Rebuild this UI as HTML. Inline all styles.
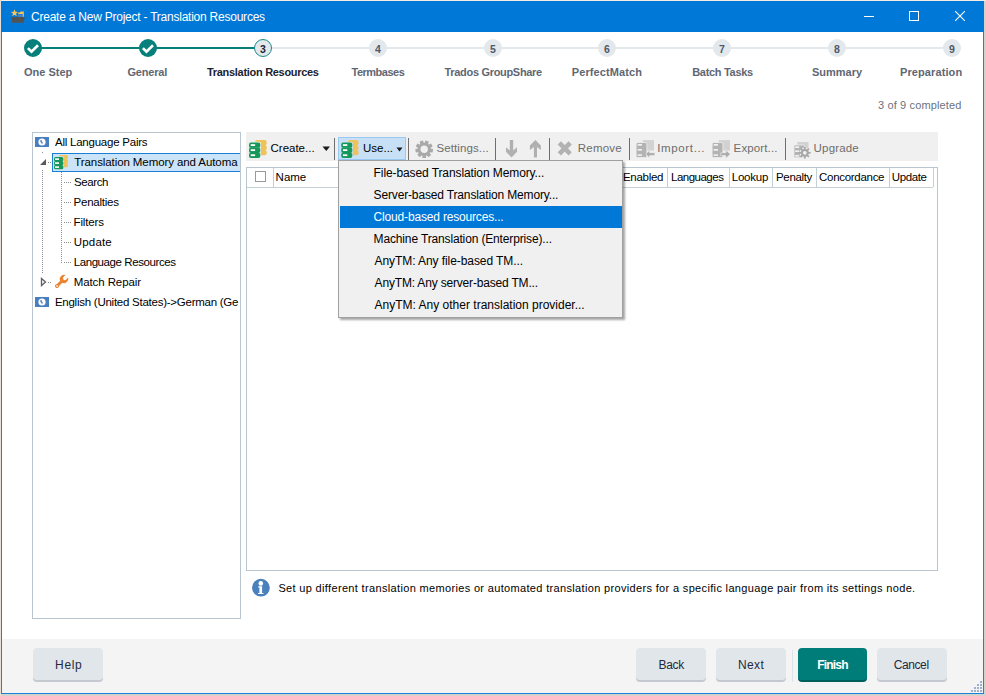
<!DOCTYPE html>
<html><head><meta charset="utf-8">
<style>
*{box-sizing:border-box;margin:0;padding:0}
html,body{width:986px;height:696px;overflow:hidden;background:#d6d1cd;font-family:"Liberation Sans",sans-serif;font-size:12px;color:#000}
.a{position:absolute}
.tx{position:absolute;white-space:nowrap;line-height:14px;z-index:2}
#mn0,#mn1,#mn2,#mn3,#mn4,#mn5,#mn6{z-index:5}
#win{position:absolute;left:1px;top:1px;width:983px;height:693px;background:#fff;border:1px solid #1a82d9;border-top:none}
#title{position:absolute;left:1px;top:1px;width:983px;height:31px;background:#0078d7}
.c{position:absolute;width:18px;height:18px;border-radius:50%;top:39px}
.done{background:#07807c}
.todo{background:#e3e8ed;color:#505865;font-weight:bold;font-size:10.5px;text-align:center;line-height:20px}
.cur{background:#e3e8ed;border:1px solid #1b8b87;color:#1b2331;font-weight:bold;font-size:10.5px;text-align:center;line-height:18px}
.line{position:absolute;top:47px;height:2px}
.tree{position:absolute;left:32px;top:132px;width:209px;height:487px;border:1px solid #b9c6cf;background:#fff}
.tb{position:absolute;left:246px;top:132px;width:692px;height:29px;background:#f0f0f0}
.sep{position:absolute;top:138px;width:1px;height:22px;background:#6e6e6e}
.grid{position:absolute;left:246px;top:167px;width:692px;height:404px;border:1px solid #b9c6cf;background:#fff}
.hs{position:absolute;top:168px;width:1px;height:19px;background:#c4d0d8}
.menu{position:absolute;left:338px;top:160px;width:285px;height:158px;background:#f0f0f0;border:1px solid #a0a0a0;box-shadow:2px 2px 2px rgba(0,0,0,0.35);z-index:4}
.footer{position:absolute;left:2px;top:639px;width:981px;height:54px;background:#f4f4f4}
.btn{position:absolute;top:648px;width:70px;height:32px;background:#e1e6ea;border-radius:4px;box-shadow:0 2px 0 #c3c9ce}
.dotv{position:absolute;width:1px;background-image:linear-gradient(#a0a0a0 50%,transparent 50%);background-size:1px 2px}
.doth{position:absolute;height:1px;background-image:linear-gradient(90deg,#a0a0a0 50%,transparent 50%);background-size:2px 1px}

</style></head><body>
<div class="a" style="left:0;top:0;width:986px;height:1px;background:#f5ebe1"></div>
<div class="a" style="left:0;top:0;width:1px;height:696px;background:#e9dfd7"></div>
<div id="win"></div>
<div id="title">
  <svg class="a" style="left:9px;top:8px" width="16" height="15" viewBox="0 0 16 15">
    <polygon points="4.50,0.30 5.47,2.77 8.11,2.93 6.07,4.61 6.73,7.17 4.50,5.75 2.27,7.17 2.93,4.61 0.89,2.93 3.53,2.77" fill="#fac55a"/>
    <path d="M8 5.4 H12.8 V7.8 H8 Z" fill="#4a86c6"/>
    <path d="M8.2 3.6 H10 L10.6 2.6 H13.8 V7.8 H12.8 V4.9 H8.2 Z" fill="#fac55a"/>
    <path d="M1.2 8 H14.7 L13.7 13.7 H2.3 Z" fill="#535353"/>
  </svg>
  <div class="a" style="left:863px;top:15px;width:10px;height:1px;background:#fff"></div>
  <div class="a" style="left:908px;top:10px;width:10px;height:10px;border:1px solid #fff"></div>
  <svg class="a" style="left:954px;top:10px" width="10" height="10" viewBox="0 0 10 10"><path d="M0 0 L10 10 M10 0 L0 10" stroke="#fff" stroke-width="1.1"/></svg>
</div>
<div class="line" style="left:33px;width:230px;background:#07807c"></div>
<div class="line" style="left:263px;width:689px;background:#e3e8ec"></div>
<div class="c done" style="left:24px"><svg width="18" height="18" viewBox="0 0 18 18" style="position:absolute;left:0;top:0"><path d="M3.9 9.1 L7.5 12.7 L14 6.3" fill="none" stroke="#fff" stroke-width="2.7"/></svg></div>
<div class="c done" style="left:139px"><svg width="18" height="18" viewBox="0 0 18 18" style="position:absolute;left:0;top:0"><path d="M3.9 9.1 L7.5 12.7 L14 6.3" fill="none" stroke="#fff" stroke-width="2.7"/></svg></div>
<div class="c cur" style="left:254px">3</div>
<div class="c todo" style="left:369px">4</div>
<div class="c todo" style="left:484px">5</div>
<div class="c todo" style="left:598px">6</div>
<div class="c todo" style="left:713px">7</div>
<div class="c todo" style="left:828px">8</div>
<div class="c todo" style="left:943px">9</div>
<!-- TREE -->
<div class="tree"></div>
<svg class="a" style="left:0;top:0;z-index:1" width="260" height="320" shape-rendering="crispEdges"><g fill="#8c8c8c"><rect x="42" y="152" width="1" height="1"/><rect x="42" y="170" width="1" height="1"/><rect x="42" y="172" width="1" height="1"/><rect x="42" y="174" width="1" height="1"/><rect x="42" y="176" width="1" height="1"/><rect x="42" y="178" width="1" height="1"/><rect x="42" y="180" width="1" height="1"/><rect x="42" y="182" width="1" height="1"/><rect x="42" y="184" width="1" height="1"/><rect x="42" y="186" width="1" height="1"/><rect x="42" y="188" width="1" height="1"/><rect x="42" y="190" width="1" height="1"/><rect x="42" y="192" width="1" height="1"/><rect x="42" y="194" width="1" height="1"/><rect x="42" y="196" width="1" height="1"/><rect x="42" y="198" width="1" height="1"/><rect x="42" y="200" width="1" height="1"/><rect x="42" y="202" width="1" height="1"/><rect x="42" y="204" width="1" height="1"/><rect x="42" y="206" width="1" height="1"/><rect x="42" y="208" width="1" height="1"/><rect x="42" y="210" width="1" height="1"/><rect x="42" y="212" width="1" height="1"/><rect x="42" y="214" width="1" height="1"/><rect x="42" y="216" width="1" height="1"/><rect x="42" y="218" width="1" height="1"/><rect x="42" y="220" width="1" height="1"/><rect x="42" y="222" width="1" height="1"/><rect x="42" y="224" width="1" height="1"/><rect x="42" y="226" width="1" height="1"/><rect x="42" y="228" width="1" height="1"/><rect x="42" y="230" width="1" height="1"/><rect x="42" y="232" width="1" height="1"/><rect x="42" y="234" width="1" height="1"/><rect x="42" y="236" width="1" height="1"/><rect x="42" y="238" width="1" height="1"/><rect x="42" y="240" width="1" height="1"/><rect x="42" y="242" width="1" height="1"/><rect x="42" y="244" width="1" height="1"/><rect x="42" y="246" width="1" height="1"/><rect x="42" y="248" width="1" height="1"/><rect x="42" y="250" width="1" height="1"/><rect x="42" y="252" width="1" height="1"/><rect x="42" y="254" width="1" height="1"/><rect x="42" y="256" width="1" height="1"/><rect x="42" y="258" width="1" height="1"/><rect x="42" y="260" width="1" height="1"/><rect x="42" y="262" width="1" height="1"/><rect x="42" y="264" width="1" height="1"/><rect x="42" y="266" width="1" height="1"/><rect x="42" y="268" width="1" height="1"/><rect x="42" y="270" width="1" height="1"/><rect x="42" y="272" width="1" height="1"/><rect x="61" y="172" width="1" height="1"/><rect x="61" y="174" width="1" height="1"/><rect x="61" y="176" width="1" height="1"/><rect x="61" y="178" width="1" height="1"/><rect x="61" y="180" width="1" height="1"/><rect x="61" y="182" width="1" height="1"/><rect x="61" y="184" width="1" height="1"/><rect x="61" y="186" width="1" height="1"/><rect x="61" y="188" width="1" height="1"/><rect x="61" y="190" width="1" height="1"/><rect x="61" y="192" width="1" height="1"/><rect x="61" y="194" width="1" height="1"/><rect x="61" y="196" width="1" height="1"/><rect x="61" y="198" width="1" height="1"/><rect x="61" y="200" width="1" height="1"/><rect x="61" y="202" width="1" height="1"/><rect x="61" y="204" width="1" height="1"/><rect x="61" y="206" width="1" height="1"/><rect x="61" y="208" width="1" height="1"/><rect x="61" y="210" width="1" height="1"/><rect x="61" y="212" width="1" height="1"/><rect x="61" y="214" width="1" height="1"/><rect x="61" y="216" width="1" height="1"/><rect x="61" y="218" width="1" height="1"/><rect x="61" y="220" width="1" height="1"/><rect x="61" y="222" width="1" height="1"/><rect x="61" y="224" width="1" height="1"/><rect x="61" y="226" width="1" height="1"/><rect x="61" y="228" width="1" height="1"/><rect x="61" y="230" width="1" height="1"/><rect x="61" y="232" width="1" height="1"/><rect x="61" y="234" width="1" height="1"/><rect x="61" y="236" width="1" height="1"/><rect x="61" y="238" width="1" height="1"/><rect x="61" y="240" width="1" height="1"/><rect x="61" y="242" width="1" height="1"/><rect x="61" y="244" width="1" height="1"/><rect x="61" y="246" width="1" height="1"/><rect x="61" y="248" width="1" height="1"/><rect x="61" y="250" width="1" height="1"/><rect x="61" y="252" width="1" height="1"/><rect x="61" y="254" width="1" height="1"/><rect x="61" y="256" width="1" height="1"/><rect x="61" y="258" width="1" height="1"/><rect x="61" y="260" width="1" height="1"/><rect x="61" y="262" width="1" height="1"/><rect x="48" y="162" width="1" height="1"/><rect x="50" y="162" width="1" height="1"/><rect x="48" y="282" width="1" height="1"/><rect x="50" y="282" width="1" height="1"/><rect x="64" y="182" width="1" height="1"/><rect x="66" y="182" width="1" height="1"/><rect x="68" y="182" width="1" height="1"/><rect x="70" y="182" width="1" height="1"/><rect x="64" y="202" width="1" height="1"/><rect x="66" y="202" width="1" height="1"/><rect x="68" y="202" width="1" height="1"/><rect x="70" y="202" width="1" height="1"/><rect x="64" y="222" width="1" height="1"/><rect x="66" y="222" width="1" height="1"/><rect x="68" y="222" width="1" height="1"/><rect x="70" y="222" width="1" height="1"/><rect x="64" y="242" width="1" height="1"/><rect x="66" y="242" width="1" height="1"/><rect x="68" y="242" width="1" height="1"/><rect x="70" y="242" width="1" height="1"/><rect x="64" y="262" width="1" height="1"/><rect x="66" y="262" width="1" height="1"/><rect x="68" y="262" width="1" height="1"/><rect x="70" y="262" width="1" height="1"/></g></svg>
<!-- selection -->
<div class="a" style="left:52px;top:153px;width:188px;height:19px;background:#cce4f7;border:1px solid #1a7fd6;border-right:none"></div>
<!-- globe icons -->
<svg class="a" style="left:35px;top:137px" width="14" height="10" viewBox="0 0 14 10"><rect width="14" height="10" fill="#4a7fbf"/><circle cx="7" cy="5" r="3.6" fill="#fff"/><path d="M5.2 3.6 L6.6 2.8 L6.9 4.6 L7.8 5.6 L7 7.6 L6.4 5.8 L5.4 5 Z" fill="#4a7fbf"/></svg>
<svg class="a" style="left:35px;top:297px" width="14" height="10" viewBox="0 0 14 10"><rect width="14" height="10" fill="#4a7fbf"/><circle cx="7" cy="5" r="3.6" fill="#fff"/><path d="M5.2 3.6 L6.6 2.8 L6.9 4.6 L7.8 5.6 L7 7.6 L6.4 5.8 L5.4 5 Z" fill="#4a7fbf"/></svg>
<!-- expander -->
<svg class="a" style="left:39px;top:158px" width="8" height="8" viewBox="0 0 8 8"><path d="M1 7 L7 7 L7 1 Z" fill="#595959"/></svg>
<svg class="a" style="left:40px;top:277px" width="7" height="10" viewBox="0 0 7 10"><path d="M1.5 1.5 L5.5 5 L1.5 8.5 Z" fill="none" stroke="#5e5e5e" stroke-width="1.3"/></svg>
<!-- tree TM icon -->
<svg class="a" style="left:53px;top:154px" width="24" height="24" viewBox="0 0 24 24"><g fill="#efc35b"><rect x="6" y="1.00" width="9" height="4.30" rx="1.52"/><rect x="6" y="5.00" width="9" height="4.30" rx="1.52"/><rect x="6" y="9.00" width="9" height="4.30" rx="1.52"/></g><g fill="#cce4f7"><rect x="0.30000000000000004" y="2.30" width="10.700000000000001" height="5.70" rx="2.02"/><rect x="0.30000000000000004" y="6.30" width="10.700000000000001" height="5.70" rx="2.02"/><rect x="0.30000000000000004" y="10.30" width="10.700000000000001" height="5.70" rx="2.02"/></g><g fill="#15985a"><rect x="1" y="3.00" width="9.3" height="4.30" rx="1.52"/><rect x="1" y="7.00" width="9.3" height="4.30" rx="1.52"/><rect x="1" y="11.00" width="9.3" height="4.30" rx="1.52"/></g><g fill="#fff"><rect x="2" y="4.32" width="4" height="1.6"/><rect x="2" y="8.32" width="4" height="1.6"/><rect x="2" y="12.32" width="4" height="1.6"/></g></svg>
<!-- wrench -->
<svg class="a" style="left:52px;top:272px" width="20" height="20" viewBox="0 0 20 20"><g transform="translate(12 7) rotate(45)"><circle cx="0" cy="0" r="4.1" fill="#ea8430"/><rect x="-1.5" y="0" width="3" height="9.9" fill="#ea8430"/><circle cx="0" cy="9.9" r="2" fill="#ea8430"/><circle cx="0" cy="-1.1" r="1.8" fill="#fff"/><rect x="-1.8" y="-6" width="3.6" height="4.9" fill="#fff"/><circle cx="0" cy="9.9" r="0.85" fill="#fff"/></g></svg>

<!-- TOOLBAR -->
<div class="tb"></div>
<svg class="a" style="left:246px;top:137px" width="24" height="24" viewBox="0 0 24 24"><g fill="#efc35b"><rect x="9" y="3.00" width="11.7" height="5.30" rx="1.93"/><rect x="9" y="8.00" width="11.7" height="5.30" rx="1.93"/><rect x="9" y="13.00" width="11.7" height="5.30" rx="1.93"/></g><g fill="#f0f0f0"><rect x="2.3" y="4.80" width="12.700000000000001" height="6.77" rx="2.43"/><rect x="2.3" y="9.87" width="12.700000000000001" height="6.77" rx="2.43"/><rect x="2.3" y="14.93" width="12.700000000000001" height="6.77" rx="2.43"/></g><g fill="#15985a"><rect x="3" y="5.50" width="11.3" height="5.37" rx="1.93"/><rect x="3" y="10.57" width="11.3" height="5.37" rx="1.93"/><rect x="3" y="15.63" width="11.3" height="5.37" rx="1.93"/></g><g fill="#fff"><rect x="4.7" y="7.17" width="4.4" height="1.8"/><rect x="4.7" y="12.24" width="4.4" height="1.8"/><rect x="4.7" y="17.31" width="4.4" height="1.8"/></g></svg>
<svg class="a" style="left:322px;top:146px" width="9" height="6" viewBox="0 0 9 6"><path d="M0.5 0.5 H8 L4.25 5 Z" fill="#1a1a1a"/></svg>
<div class="sep" style="left:334px"></div>
<div class="a" style="left:338px;top:137px;width:68px;height:23px;background:#c8e0f6;border:1px solid #99c9f2"></div>
<svg class="a" style="left:338px;top:137px" width="24" height="24" viewBox="0 0 24 24"><g fill="#efc35b"><rect x="9.7" y="3.00" width="10.8" height="5.30" rx="1.93"/><rect x="9.7" y="8.00" width="10.8" height="5.30" rx="1.93"/><rect x="9.7" y="13.00" width="10.8" height="5.30" rx="1.93"/></g><g fill="#cce4f7"><rect x="2.5" y="4.80" width="12.5" height="6.77" rx="2.43"/><rect x="2.5" y="9.87" width="12.5" height="6.77" rx="2.43"/><rect x="2.5" y="14.93" width="12.5" height="6.77" rx="2.43"/></g><g fill="#15985a"><rect x="3.2" y="5.50" width="11.1" height="5.37" rx="1.93"/><rect x="3.2" y="10.57" width="11.1" height="5.37" rx="1.93"/><rect x="3.2" y="15.63" width="11.1" height="5.37" rx="1.93"/></g><g fill="#fff"><rect x="4.9" y="7.17" width="4.4" height="1.8"/><rect x="4.9" y="12.24" width="4.4" height="1.8"/><rect x="4.9" y="17.31" width="4.4" height="1.8"/></g></svg>
<svg class="a" style="left:396px;top:147px" width="7" height="5" viewBox="0 0 7 5"><path d="M0.5 0.5 H6.5 L3.5 4.5 Z" fill="#1a1a1a"/></svg>
<div class="sep" style="left:408px"></div>
<!-- gear -->
<svg class="a" style="left:412px;top:137px" width="24" height="24" viewBox="0 0 24 24"><g fill="#a9a9a9"><circle cx="12.2" cy="12.3" r="6.6"/><rect x="10.4" y="3.5" width="3.6" height="4" rx="0.6" transform="rotate(20 12.2 12.3)"/><rect x="10.4" y="3.5" width="3.6" height="4" rx="0.6" transform="rotate(60 12.2 12.3)"/><rect x="10.4" y="3.5" width="3.6" height="4" rx="0.6" transform="rotate(100 12.2 12.3)"/><rect x="10.4" y="3.5" width="3.6" height="4" rx="0.6" transform="rotate(140 12.2 12.3)"/><rect x="10.4" y="3.5" width="3.6" height="4" rx="0.6" transform="rotate(180 12.2 12.3)"/><rect x="10.4" y="3.5" width="3.6" height="4" rx="0.6" transform="rotate(220 12.2 12.3)"/><rect x="10.4" y="3.5" width="3.6" height="4" rx="0.6" transform="rotate(260 12.2 12.3)"/><rect x="10.4" y="3.5" width="3.6" height="4" rx="0.6" transform="rotate(300 12.2 12.3)"/><rect x="10.4" y="3.5" width="3.6" height="4" rx="0.6" transform="rotate(340 12.2 12.3)"/></g><circle cx="12.2" cy="12.3" r="3.7" fill="#f0f0f0"/></svg>
<div class="sep" style="left:495px"></div>
<svg class="a" style="left:502px;top:137px" width="44" height="24" viewBox="0 0 44 24"><g fill="#b0b0b0"><path d="M7.8 3.1 H11.2 V13.4 L15 10.3 V14.7 L9.5 20.5 L4 14.7 V10.3 L7.8 13.4 Z"/><path d="M33.4 2.9 L38.8 8.5 V13 L35 10 V20.5 H31.9 V10 L27.9 13 V8.5 Z"/></g></svg>

<div class="sep" style="left:549px"></div>
<svg class="a" style="left:552px;top:137px" width="26" height="24" viewBox="0 0 26 24"><path d="M7.3 5.9 L18.2 16.9 M18.2 5.9 L7.3 16.9" stroke="#b2b2b2" stroke-width="4.6"/></svg>
<div class="sep" style="left:629px"></div>
<svg class="a" style="left:632px;top:136px" width="28" height="26" viewBox="0 0 28 26"><rect x="10.8" y="4.1" width="11.2" height="10.5" fill="#d2d2d2"/><rect x="4.1" y="6.5" width="10.8" height="15.1" rx="1.5" fill="#b3b3b3" stroke="#f0f0f0" stroke-width="0.8"/><g fill="#f0f0f0"><rect x="5.6" y="8" width="4.4" height="1.7"/><rect x="5.6" y="13" width="4.4" height="1.7"/><rect x="5.6" y="18.3" width="4.4" height="1.6"/></g><path d="M13.8 18.1 L17.6 14.2 V16.8 H22.8 V19.6 H17.6 V22 Z" fill="#ababab" stroke="#f0f0f0" stroke-width="0.6"/></svg>
<svg class="a" style="left:708px;top:136px" width="28" height="26" viewBox="0 0 28 26"><rect x="10.8" y="4.1" width="11.2" height="10.5" fill="#d2d2d2"/><rect x="4.1" y="6.5" width="10.8" height="15.1" rx="1.5" fill="#b3b3b3" stroke="#f0f0f0" stroke-width="0.8"/><g fill="#f0f0f0"><rect x="5.6" y="8" width="4.4" height="1.7"/><rect x="5.6" y="13" width="4.4" height="1.7"/><rect x="5.6" y="18.3" width="4.4" height="1.6"/></g><path d="M22.4 18.1 L17.8 14.2 V16.8 H12.7 V19.6 H17.8 V22.4 Z" fill="#ababab" stroke="#f0f0f0" stroke-width="0.6"/></svg>
<div class="sep" style="left:785px"></div>
<svg class="a" style="left:788px;top:136px" width="26" height="26" viewBox="0 0 26 26"><rect x="9.3" y="6" width="11.2" height="7" fill="#d2d2d2"/><rect x="6" y="9" width="10.4" height="12.7" rx="1.2" fill="#b3b3b3" stroke="#f0f0f0" stroke-width="0.8"/><g fill="#f0f0f0"><rect x="7.1" y="10.3" width="4.1" height="1.7"/><rect x="7.1" y="14.4" width="4.1" height="1.6"/><rect x="7.1" y="19" width="4.1" height="1.7"/></g><circle cx="16.8" cy="16.8" r="5.3" fill="#f0f0f0"/><g fill="#a6a6a6"><circle cx="16.8" cy="16.8" r="3.9"/><rect x="15.9" y="11" width="1.8" height="2.6" transform="rotate(0 16.8 16.8)"/><rect x="15.9" y="11" width="1.8" height="2.6" transform="rotate(45 16.8 16.8)"/><rect x="15.9" y="11" width="1.8" height="2.6" transform="rotate(90 16.8 16.8)"/><rect x="15.9" y="11" width="1.8" height="2.6" transform="rotate(135 16.8 16.8)"/><rect x="15.9" y="11" width="1.8" height="2.6" transform="rotate(180 16.8 16.8)"/><rect x="15.9" y="11" width="1.8" height="2.6" transform="rotate(225 16.8 16.8)"/><rect x="15.9" y="11" width="1.8" height="2.6" transform="rotate(270 16.8 16.8)"/><rect x="15.9" y="11" width="1.8" height="2.6" transform="rotate(315 16.8 16.8)"/></g><circle cx="16.8" cy="16.8" r="1.9" fill="#f0f0f0"/></svg>

<!-- GRID -->
<div class="grid"></div>
<div class="a" style="left:247px;top:187px;width:686px;height:1px;background:#c4d0d8"></div>
<div class="a" style="left:255px;top:171px;width:11px;height:11px;border:1px solid #9a9a9a;background:#fff"></div>
<div class="hs" style="left:273px"></div>
<div class="hs" style="left:667px"></div>
<div class="hs" style="left:729px"></div>
<div class="hs" style="left:772px"></div>
<div class="hs" style="left:816px"></div>
<div class="hs" style="left:889px"></div>
<div class="hs" style="left:933px"></div>

<!-- MENU -->
<div class="menu"></div>
<div class="a" style="left:340px;top:206px;width:282px;height:22px;background:#0078d7;z-index:4"></div>

<!-- INFO -->
<svg class="a" style="left:248px;top:576px" width="26" height="24" viewBox="0 0 26 24"><circle cx="12.9" cy="11.7" r="8.9" fill="#4a80bc"/><circle cx="12.8" cy="7.4" r="2.3" fill="#fff"/><path d="M10.2 10.3 H14.1 V16.9 H15.5 V18.1 H10 V16.9 H11.4 V11.5 H10.2 Z" fill="#fff"/></svg>

<!-- FOOTER -->
<div class="footer"></div>
<div class="btn" style="left:33px"></div>
<div class="btn" style="left:636px"></div>
<div class="btn" style="left:716px"></div>
<div class="a" style="left:792px;top:650px;width:1px;height:32px;background:#dde3e8"></div>
<div class="btn" style="left:798px;width:69px;background:#007c79;box-shadow:0 2px 0 #005f5c;color:#fff;font-weight:bold"></div>
<div class="btn" style="left:877px"></div>
<svg class="a" style="left:970px;top:680px" width="14" height="14" viewBox="0 0 14 14"><g fill="#9fb0cf"><rect x="10" y="1" width="2" height="2"/><rect x="10" y="4" width="2" height="2"/><rect x="7" y="4" width="2" height="2"/><rect x="10" y="7" width="2" height="2"/><rect x="7" y="7" width="2" height="2"/><rect x="4" y="7" width="2" height="2"/><rect x="10" y="10" width="2" height="2"/><rect x="7" y="10" width="2" height="2"/><rect x="4" y="10" width="2" height="2"/><rect x="1" y="10" width="2" height="2"/></g></svg>

<div class="tx" id="ttl" style="left:31.00px;top:10.00px;font-size:12px;font-weight:400;color:#fff;letter-spacing:-0.233px">Create a New Project - Translation Resources</div>
<div class="tx" id="lbl0" style="left:24.00px;top:65.00px;font-size:11px;font-weight:700;color:#5f6773;letter-spacing:0.000px">One Step</div>
<div class="tx" id="lbl1" style="left:127.40px;top:65.00px;font-size:11px;font-weight:700;color:#5f6773;letter-spacing:-0.167px">General</div>
<div class="tx" id="lbl2" style="left:207.00px;top:65.00px;font-size:11px;font-weight:700;color:#1b2331;letter-spacing:-0.300px">Translation Resources</div>
<div class="tx" id="lbl3" style="left:351.50px;top:65.00px;font-size:11px;font-weight:700;color:#5f6773;letter-spacing:-0.500px">Termbases</div>
<div class="tx" id="lbl4" style="left:444.50px;top:65.00px;font-size:11px;font-weight:700;color:#5f6773;letter-spacing:-0.312px">Trados GroupShare</div>
<div class="tx" id="lbl5" style="left:571.80px;top:65.00px;font-size:11px;font-weight:700;color:#5f6773;letter-spacing:0.091px">PerfectMatch</div>
<div class="tx" id="lbl6" style="left:692.20px;top:65.00px;font-size:11px;font-weight:700;color:#5f6773;letter-spacing:-0.300px">Batch Tasks</div>
<div class="tx" id="lbl7" style="left:811.90px;top:65.00px;font-size:11px;font-weight:700;color:#5f6773;letter-spacing:0.000px">Summary</div>
<div class="tx" id="lbl8" style="left:900.00px;top:65.00px;font-size:11px;font-weight:700;color:#5f6773;letter-spacing:0.100px">Preparation</div>
<div class="tx" id="completed" style="left:878.00px;top:98.00px;font-size:11px;font-weight:400;color:#6b7280;letter-spacing:0.133px">3 of 9 completed</div>
<div class="tx" id="tree0" style="left:55.00px;top:135.00px;font-size:11.5px;font-weight:400;color:#000;letter-spacing:-0.235px">All Language Pairs</div>
<div class="tx" id="tree1" style="left:74.30px;top:155.00px;font-size:11.5px;font-weight:400;color:#000;letter-spacing:-0.090px;width:165.70px;overflow:hidden">Translation Memory and Automa</div>
<div class="tx" id="tree2" style="left:74.00px;top:175.00px;font-size:11.5px;font-weight:400;color:#000;letter-spacing:-0.400px">Search</div>
<div class="tx" id="tree3" style="left:73.60px;top:195.00px;font-size:11.5px;font-weight:400;color:#000;letter-spacing:-0.250px">Penalties</div>
<div class="tx" id="tree4" style="left:73.60px;top:215.00px;font-size:11.5px;font-weight:400;color:#000;letter-spacing:-0.167px">Filters</div>
<div class="tx" id="tree5" style="left:73.70px;top:235.00px;font-size:11.5px;font-weight:400;color:#000;letter-spacing:0.200px">Update</div>
<div class="tx" id="tree6" style="left:73.70px;top:255.00px;font-size:11.5px;font-weight:400;color:#000;letter-spacing:-0.412px">Language Resources</div>
<div class="tx" id="tree7" style="left:73.70px;top:275.00px;font-size:11.5px;font-weight:400;color:#000;letter-spacing:-0.091px">Match Repair</div>
<div class="tx" id="tree8" style="left:54.90px;top:295.00px;font-size:11.5px;font-weight:400;color:#000;letter-spacing:-0.250px;width:185.10px;overflow:hidden">English (United States)-&gt;German (Ge</div>
<div class="tx" id="tb0" style="left:270.50px;top:141.00px;font-size:11.5px;font-weight:400;color:#000;letter-spacing:0.000px">Create...</div>
<div class="tx" id="tb1" style="left:363.00px;top:141.00px;font-size:11.5px;font-weight:400;color:#000;letter-spacing:0.000px">Use...</div>
<div class="tx" id="tb2" style="left:436.50px;top:141.00px;font-size:11.5px;font-weight:400;color:#6d6d6d;letter-spacing:0.100px">Settings...</div>
<div class="tx" id="tb3" style="left:577.80px;top:141.00px;font-size:11.5px;font-weight:400;color:#6d6d6d;letter-spacing:0.200px">Remove</div>
<div class="tx" id="tb4" style="left:657.30px;top:141.00px;font-size:11.5px;font-weight:400;color:#6d6d6d;letter-spacing:0.625px">Import...</div>
<div class="tx" id="tb5" style="left:733.60px;top:141.00px;font-size:11.5px;font-weight:400;color:#6d6d6d;letter-spacing:0.125px">Export...</div>
<div class="tx" id="tb6" style="left:813.60px;top:141.00px;font-size:11.5px;font-weight:400;color:#6d6d6d;letter-spacing:0.167px">Upgrade</div>
<div class="tx" id="hd0" style="left:275.60px;top:170.00px;font-size:11.5px;font-weight:400;color:#000;letter-spacing:0.000px">Name</div>
<div class="tx" id="hd1" style="left:623.00px;top:170.00px;font-size:11.5px;font-weight:400;color:#000;letter-spacing:-0.300px">Enabled</div>
<div class="tx" id="hd2" style="left:671.00px;top:170.00px;font-size:11.5px;font-weight:400;color:#000;letter-spacing:-0.500px">Languages</div>
<div class="tx" id="hd3" style="left:731.70px;top:170.00px;font-size:11.5px;font-weight:400;color:#000;letter-spacing:-0.200px">Lookup</div>
<div class="tx" id="hd4" style="left:776.00px;top:170.00px;font-size:11.5px;font-weight:400;color:#000;letter-spacing:-0.333px">Penalty</div>
<div class="tx" id="hd5" style="left:819.10px;top:170.00px;font-size:11.5px;font-weight:400;color:#000;letter-spacing:-0.300px">Concordance</div>
<div class="tx" id="hd6" style="left:891.80px;top:170.00px;font-size:11.5px;font-weight:400;color:#000;letter-spacing:-0.400px">Update</div>
<div class="tx" id="mn0" style="left:373.60px;top:166.00px;font-size:12px;font-weight:400;color:#000;letter-spacing:-0.097px">File-based Translation Memory...</div>
<div class="tx" id="mn1" style="left:373.60px;top:188.00px;font-size:12px;font-weight:400;color:#000;letter-spacing:-0.152px">Server-based Translation Memory...</div>
<div class="tx" id="mn2" style="left:373.60px;top:210.00px;font-size:12px;font-weight:400;color:#fff;letter-spacing:-0.174px">Cloud-based resources...</div>
<div class="tx" id="mn3" style="left:373.60px;top:232.00px;font-size:12px;font-weight:400;color:#000;letter-spacing:-0.147px">Machine Translation (Enterprise)...</div>
<div class="tx" id="mn4" style="left:374.60px;top:254.00px;font-size:12px;font-weight:400;color:#000;letter-spacing:-0.077px">AnyTM: Any file-based TM...</div>
<div class="tx" id="mn5" style="left:374.60px;top:276.00px;font-size:12px;font-weight:400;color:#000;letter-spacing:-0.179px">AnyTM: Any server-based TM...</div>
<div class="tx" id="mn6" style="left:374.60px;top:298.00px;font-size:12px;font-weight:400;color:#000;letter-spacing:0.000px">AnyTM: Any other translation provider...</div>
<div class="tx" id="info" style="left:278.40px;top:581.00px;font-size:11px;font-weight:400;color:#000;letter-spacing:0.339px">Set up different translation memories or automated translation providers for a specific language pair from its settings node.</div>
<div class="tx" id="bt0" style="left:55.10px;top:658.00px;font-size:12px;font-weight:400;color:#1f2a3c;letter-spacing:0.667px">Help</div>
<div class="tx" id="bt1" style="left:658.60px;top:658.00px;font-size:12px;font-weight:400;color:#1f2a3c;letter-spacing:-0.333px">Back</div>
<div class="tx" id="bt2" style="left:738.10px;top:658.00px;font-size:12px;font-weight:400;color:#1f2a3c;letter-spacing:0.333px">Next</div>
<div class="tx" id="bt3" style="left:817.20px;top:658.00px;font-size:12px;font-weight:700;color:#fff;letter-spacing:-0.800px">Finish</div>
<div class="tx" id="bt4" style="left:893.70px;top:658.00px;font-size:12px;font-weight:400;color:#1f2a3c;letter-spacing:-0.400px">Cancel</div>

</body></html>
